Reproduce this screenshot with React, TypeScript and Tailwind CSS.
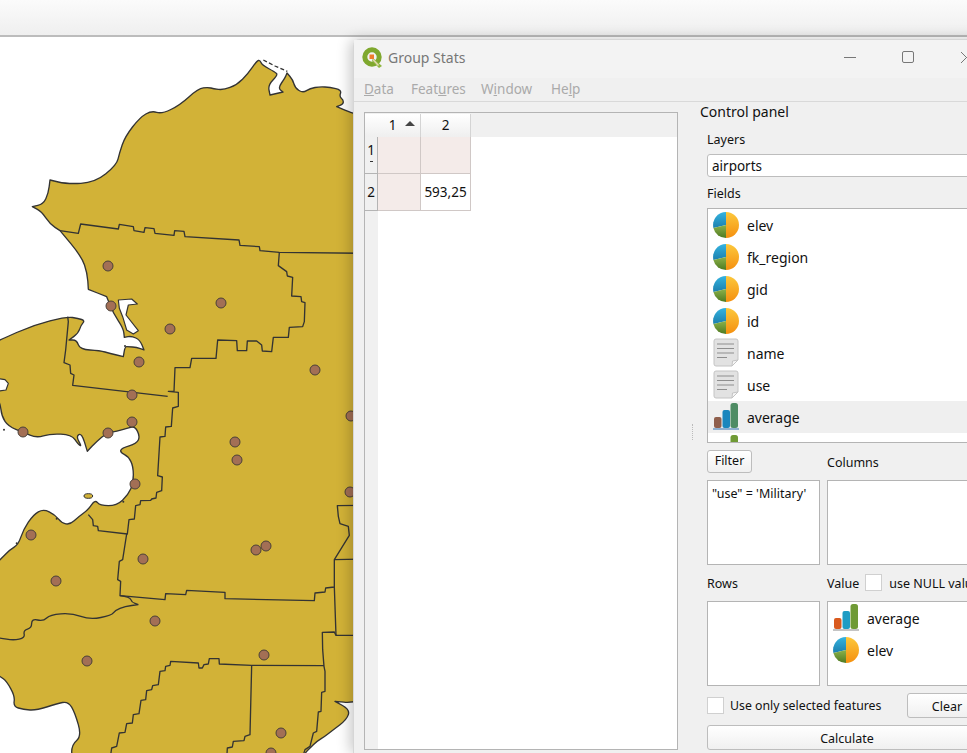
import type { ReactNode } from 'react';

// map coordinates are 3x page values, scaled down in the svg group
const coast =
  '1100,350 1058,340 1035,330 1010,320 1010,320 1030,312 1030,300 1018,290 1025,270 990,262 960,260 930,265 909,279 885,264 879,240 861,219 861,219 855,234 834,264 849,276 849,276 810,285 810,285 804,255 834,225 825,216 786,195 780,180 770,183 745,220 710,255 670,270 640,266 625,262 595,265 540,315 485,342 455,332 420,352 375,410 358,460 350,495 285,548 200,552 150,540 150,540 145,580 130,612 97,620 97,620 125,635 150,672 180,692 180,692 245,770 262,820 265,868 265,868 320,890 320,890 340,940 370,985 373,1012 373,1012 395,1008 420,1020 432,1050 432,1050 410,1042 385,1040 375,1040 370,1070 370,1070 330,1060 300,1052 240,1048 230,1020 207,1020 207,1020 235,1000 243,975 255,962 235,955 200,950 100,975 0,1020 -20,1030 -20,1190 0,1204 5,1249 25,1279 70,1297 110,1314 150,1301 215,1304 235,1334 245,1339 228,1309 245,1299 262,1354 262,1354 290,1324 320,1299 350,1294 385,1284 405,1279 420,1309 410,1331 365,1344 360,1357 385,1369 400,1399 400,1449 385,1484 350,1517 300,1517 285,1499 265,1529 235,1551 210,1574 185,1569 165,1544 130,1527 100,1544 70,1589 55,1634 30,1649 0,1679 -20,1700 -20,2020 0,2029 20,2044 45,2089 40,2119 70,2129 110,2131 170,2111 205,2104 225,2139 245,2209 215,2234 215,2280 905,2280 915,2259 930,2244 950,2224 975,2209 1000,2189 1040,2159 1050,2129 1005,2104 1005,2104 1058,2109 1100,2090 1100,350';

const holes = [
  'M355 900 L395 897 L412 912 L385 915 L378 945 L415 992 L400 1002 L380 990 L368 950 L358 925 Z',
  'M-10 1135 L15 1139 L25 1150 L18 1170 L-10 1174 Z',
];

const specks = [
  [370, 1505], [12, 1289], [50, 1630], [375, 1038], [170, 1556],
];

const borders = [
  '180,692 235,700 242,672 355,687 358,673 400,680 402,692 432,697 435,683 462,686 465,700 522,706 524,692 552,694 555,710 717,720 720,736 778,740 780,752 838,757 1100,760',
  '838,757 835,797 860,815 862,828 878,832 875,888 903,890 905,905 915,908 913,965 908,980 868,982 865,1012 820,1012 815,1055 787,1053 785,1035 770,1023 742,1023 740,1052 712,1052 710,1022 653,1020 648,1075 575,1075 570,1103 525,1103 522,1174 505,1174 535,1177 535,1219 518,1224 514,1279 497,1281 495,1309 480,1311 473,1427 487,1431 485,1472 470,1477 468,1494 455,1497 452,1501 422,1502 420,1514 407,1517 403,1557 387,1559 382,1602 295,1592 293,1579 280,1577 278,1559 265,1544',
  '380,1602 368,1679 358,1684 353,1739 362,1744 360,1787 495,1799 497,1781 557,1784 560,1771 675,1777 675,1796 943,1802 945,1779 975,1776 977,1764 1003,1761 1003,1679 1048,1606 1045,1579 1020,1571 1015,1549 1012,1517 1100,1516',
  '1003,1679 1100,1677',
  '1003,1761 1008,1906 1100,1906',
  '1008,1906 1003,1896 967,1897 968,1949 972,1999 975,2014 975,2074 965,2077 963,2134 955,2136 950,2194 940,2199 930,2239 915,2249 905,2280',
  '972,1997 755,1996 658,1992 657,1976 628,1976 625,1992 612,1994 607,2004 597,2004 595,1989 512,1984 510,1996 497,1999 495,2012 480,2014 475,2054 458,2057 455,2069 440,2072 437,2099 423,2101 417,2141 400,2144 397,2169 380,2171 375,2197 358,2199 350,2239 335,2244 330,2280',
  '755,1996 750,2204 735,2209 732,2222 700,2224 697,2241 682,2244 680,2280',
  '203,950 205,965 197,1050 192,1088 210,1095 212,1120 222,1125 218,1156 503,1189',
];

const river = '360,1787 390,1791 395,1807 415,1814 415,1814 375,1819 345,1831 335,1846 270,1859 215,1839 150,1844 130,1864 95,1856 95,1884 70,1891 75,1914 40,1921 0,1914 -20,1912';

const airports = [
  [108, 266], [111, 306], [221, 303], [170, 329], [139, 362], [315, 370], [132, 395], [132, 422],
  [108, 433], [23, 432], [235, 442], [237, 460], [135, 484], [31, 535], [143, 559], [256, 550],
  [266, 546], [56, 581], [155, 621], [264, 655], [87, 661], [281, 733], [271, 753], [351, 416], [350, 492],
];

// rounds a list of points into a path through the segment midpoints
function smooth(points: string) {
  const pts = points.split(' ').map((p) => p.split(',').map(Number));
  let d = `M${pts[0][0]} ${pts[0][1]}`;
  for (let i = 1; i < pts.length - 1; i++) {
    const mx = (pts[i][0] + pts[i + 1][0]) / 2;
    const my = (pts[i][1] + pts[i + 1][1]) / 2;
    d += ` Q${pts[i][0]} ${pts[i][1]} ${mx} ${my}`;
  }
  const last = pts[pts.length - 1];
  return `${d} L${last[0]} ${last[1]}`;
}

function MapView() {
  return (
    <svg width="360" height="716" viewBox="0 37 360 716" className="block">
      <g transform="scale(0.33333)">
        <path d={smooth(coast)} fill="#d2b237" stroke="#333" strokeWidth="4" strokeLinejoin="round" />
        <path d="M790 180 L825 198 L862 214" fill="none" stroke="#333" strokeWidth="4" strokeDasharray="12 7" />
        {holes.map((d, i) => (
          <path key={i} d={d} fill="#fff" stroke="#333" strokeWidth="3.5" strokeLinejoin="round" />
        ))}
        <ellipse cx="265" cy="1488" rx="13" ry="7" fill="#d2b237" stroke="#333" strokeWidth="3" />
        {specks.map(([cx, cy], i) => (
          <circle key={i} cx={cx} cy={cy} r="3" fill="#333" />
        ))}
        {borders.map((pts, i) => (
          <polyline key={i} points={pts} fill="none" stroke="#333" strokeWidth="4" strokeLinejoin="round" />
        ))}
        <path d={smooth(river)} fill="none" stroke="#333" strokeWidth="4" />
      </g>
      {airports.map(([cx, cy], i) => (
        <circle key={i} cx={cx} cy={cy} r="5" fill="#a36f55" stroke="#4a4038" strokeWidth="1" />
      ))}
    </svg>
  );
}

function QgisLogo() {
  return (
    <svg width="21" height="21" viewBox="0 0 21 21">
      <circle cx="10" cy="10" r="7.2" fill="none" stroke="#7fa82e" strokeWidth="5" />
      <path d="M11 11 L20 19 L17 21 L10 14 Z" fill="#8fb640" />
      <path d="M11 12.5 L16.5 18.5" stroke="#e4d9b0" strokeWidth="1.6" />
      <rect x="7.5" y="7.5" width="4.5" height="4.5" fill="#ee7d2c" />
    </svg>
  );
}

function PieIcon() {
  return (
    <svg width="26" height="26" viewBox="0 0 26 26">
      <defs>
        <linearGradient id="pieOrange" x1="0" y1="0" x2="0" y2="1">
          <stop offset="0" stopColor="#fcc83c" />
          <stop offset="1" stopColor="#f5900f" />
        </linearGradient>
        <linearGradient id="pieBlue" x1="0" y1="0" x2="0" y2="1">
          <stop offset="0" stopColor="#35b4e0" />
          <stop offset="1" stopColor="#1c7fae" />
        </linearGradient>
        <linearGradient id="pieGreen" x1="0" y1="0" x2="0" y2="1">
          <stop offset="0" stopColor="#8cb24a" />
          <stop offset="1" stopColor="#4f7a22" />
        </linearGradient>
      </defs>
      <path d="M13 13 V0 A13 13 0 0 1 13 26 Z" fill="url(#pieOrange)" />
      <path d="M13 13 V0 A13 13 0 0 0 0.4 16 Z" fill="url(#pieBlue)" />
      <path d="M13 13 L0.4 16 A13 13 0 0 0 13 26 Z" fill="url(#pieGreen)" />
    </svg>
  );
}

function TextIcon() {
  return (
    <svg width="26" height="30" viewBox="0 0 26 30">
      <path d="M3 1 H23 A2 2 0 0 1 25 3 V22 L19 28 H3 A2 2 0 0 1 1 26 V3 A2 2 0 0 1 3 1 Z" fill="#e2e2e2" stroke="#c4c4c4" />
      <path d="M19 28 L19.5 23 L25 22 Z" fill="#f6f6f6" stroke="#c4c4c4" />
      <path d="M4 6 H21 M4 10.5 H21 M4 15 H21 M4 19.5 H14" stroke="#8e8e8e" strokeWidth="1.2" />
    </svg>
  );
}

function BarIcon({ muted = false }: { muted?: boolean }) {
  const c = muted
    ? ['#8f5f4c', '#1a86bd', '#4f8c64', '#8fb0d0']
    : ['#d95a1e', '#1f9cc4', '#6f9a35', '#c4c4c4'];
  return (
    <svg width="26" height="28" viewBox="0 0 26 28">
      <rect x="1" y="14" width="7.5" height="11" rx="2" fill={c[0]} />
      <rect x="9.5" y="7" width="7.5" height="18" rx="2" fill={c[1]} />
      <rect x="17.5" y="0" width="7.5" height="25" rx="2.5" fill={c[2]} />
      <rect x="0" y="25" width="26" height="2" fill={c[3]} />
    </svg>
  );
}

function FieldRow({ icon, label, active }: { icon: ReactNode; label: string; active?: boolean }) {
  return (
    <div className={`flex h-8 shrink-0 items-center gap-2 pl-[5px] ${active ? 'bg-[#efefef]' : ''}`}>
      <span className="flex w-[26px] justify-center">{icon}</span>
      <span>{label}</span>
    </div>
  );
}

function Check() {
  return <span className="block h-[17px] w-[17px] shrink-0 border border-[#d0d0d0] bg-white" />;
}

function PushButton({ children, className }: { children: ReactNode; className: string }) {
  return (
    <div className={`flex items-center justify-center rounded-[3px] border border-[#bdbdbd] bg-gradient-to-b from-white to-[#f0f0f0] ${className}`}>
      {children}
    </div>
  );
}

function MenuItem({ pre, u, post, className }: { pre: string; u: string; post: string; className?: string }) {
  return (
    <span className={className}>
      {pre}
      <span className="underline">{u}</span>
      {post}
    </span>
  );
}

export default function App() {
  return (
    <div className="relative h-[753px] w-[967px] overflow-hidden bg-white font-['Noto_Sans',sans-serif] text-[14px] text-[#111]">
      <div className="h-[37px] border-b-2 border-[#bcbcbc] bg-gradient-to-b from-[#fbfbfb] to-[#efefef]" />
      <MapView />

      <div className="absolute left-[353px] top-[39px] flex h-[714px] w-[660px] flex-col rounded-tl-[7px] border-l border-t border-[#d6d6d6] bg-[#f0f0f0] shadow-[-3px_0_14px_rgba(0,0,0,0.22)]">
        <div className="flex h-[38px] shrink-0 items-center bg-[#f3f3f3] pb-[4px] pl-2">
          <QgisLogo />
          <span className="ml-[5px] text-[14px] text-[#777]">Group Stats</span>
          <svg className="ml-[379px]" width="13" height="13" viewBox="0 0 13 13">
            <path d="M0 6.5 H12" stroke="#777" />
          </svg>
          <svg className="ml-[45px]" width="13" height="13" viewBox="0 0 13 13">
            <rect x="0.5" y="0.5" width="11" height="11" rx="1.5" fill="none" stroke="#777" />
          </svg>
          <svg className="ml-[45px]" width="13" height="13" viewBox="0 0 13 13">
            <path d="M1 1 L12 12 M12 1 L1 12" stroke="#777" />
          </svg>
        </div>

        <div className="flex h-[24px] shrink-0 items-center border-b border-[#d9d9d9] pl-[10px] text-[13.5px] text-[#aaa]">
          <MenuItem pre="" u="D" post="ata" className="w-[47px]" />
          <MenuItem pre="Feat" u="u" post="res" className="w-[70px]" />
          <MenuItem pre="W" u="i" post="ndow" className="w-[70px]" />
          <MenuItem pre="He" u="l" post="p" />
        </div>

        <div className="flex min-h-0 flex-1 text-[13.5px]">
          <div className="mb-[3px] ml-[10px] mt-[10px] flex w-[314px] flex-col border border-[#b4b4b4] bg-white">
            <div className="flex h-[24px] shrink-0 bg-[#f0f0f0] pt-[1px]">
              <div className="relative flex w-[56px] items-center justify-center border-r border-[#d4d4d4] bg-gradient-to-b from-white to-[#efefef]">
                1
                <span className="absolute right-[5px] top-[7px] h-0 w-0 border-x-[5px] border-b-[5px] border-x-transparent border-b-[#444]" />
              </div>
              <div className="flex w-[50px] items-center justify-center border-r border-[#d4d4d4] bg-gradient-to-b from-white to-[#efefef]">
                2
              </div>
            </div>
            <div className="flex h-[37px] shrink-0">
              <div className="flex w-[13px] flex-col items-center border-b border-r border-[#b4b4b4] bg-[#f0f0f0] pt-[4px] leading-[18px]">
                1<span className="mt-[2px] h-[1px] w-[3px] bg-[#333]" />
              </div>
              <div className="w-[43px] border-b border-r border-[#d0c8c6] bg-[#f4ebe9]" />
              <div className="w-[50px] border-b border-r border-[#d0c8c6] bg-[#f4ebe9]" />
            </div>
            <div className="flex h-[37px] shrink-0">
              <div className="flex w-[13px] items-center justify-center border-b border-r border-[#b4b4b4] bg-[#f0f0f0]">2</div>
              <div className="w-[43px] border-b border-r border-[#d0c8c6] bg-[#f4ebe9]" />
              <div className="flex w-[50px] items-center justify-center border-b border-r border-[#d0c8c6]">593,25</div>
            </div>
            <div className="w-[13px] flex-1 bg-[#f0f0f0]" />
          </div>

          <div className="relative w-[22px]">
            <span className="absolute left-[14px] top-[322px] h-[16px] w-[1px] border-l border-dotted border-[#bbb]" />
          </div>

          <div className="flex w-[287px] flex-col">
            <div className="h-[20px] text-[14px] leading-[20px]">Control panel</div>
            <div className="flex flex-1 flex-col pl-[7px]">
              <div className="mt-[8px] h-[20px] text-[12.5px] leading-[20px]">Layers</div>
              <div className="mt-[4px] flex h-[23px] w-[280px] items-center rounded-[3px] border border-[#bdbdbd] bg-white pl-[4px] pt-[2px]">
                airports
              </div>
              <div className="mt-[7px] h-[20px] text-[12.5px] leading-[20px]">Fields</div>
              <div className="mt-[4px] flex h-[235px] w-[280px] flex-col overflow-hidden border border-[#b4b4b4] bg-white text-[14px]">
                <FieldRow icon={<PieIcon />} label="elev" />
                <FieldRow icon={<PieIcon />} label="fk_region" />
                <FieldRow icon={<PieIcon />} label="gid" />
                <FieldRow icon={<PieIcon />} label="id" />
                <FieldRow icon={<TextIcon />} label="name" />
                <FieldRow icon={<TextIcon />} label="use" />
                <FieldRow icon={<BarIcon muted />} label="average" active />
                <FieldRow icon={<BarIcon />} label="" />
              </div>

              <div className="mt-[7px] flex h-[23px] items-center">
                <PushButton className="h-[23px] w-[45px] text-[12.5px]">Filter</PushButton>
                <span className="ml-[75px] pt-[4px] text-[12.5px]">Columns</span>
              </div>
              <div className="mt-[7px] flex h-[85px] gap-[7px]">
                <div className="w-[113px] border border-[#b4b4b4] bg-white px-[4px] py-[4px] text-[12.5px]">"use" = 'Military'</div>
                <div className="w-[160px] border border-[#b4b4b4] bg-white" />
              </div>

              <div className="mt-[9px] flex h-[17px] items-center text-[12.5px]">
                <span className="w-[120px] pt-[4px]">Rows</span>
                <span className="pt-[4px]">Value</span>
                <span className="ml-[6px]"><Check /></span>
                <span className="ml-[7px] whitespace-nowrap pt-[4px]">use NULL values</span>
              </div>
              <div className="mt-[10px] flex h-[85px] gap-[7px]">
                <div className="w-[113px] border border-[#b4b4b4] bg-white" />
                <div className="flex w-[160px] flex-col border border-[#b4b4b4] bg-white text-[14px]">
                  <FieldRow icon={<BarIcon />} label="average" />
                  <FieldRow icon={<PieIcon />} label="elev" />
                </div>
              </div>

              <div className="mt-[7px] flex h-[25px] items-center text-[12.3px]">
                <Check />
                <span className="ml-[6px] w-[177px] pt-[2px]">Use only selected features</span>
                <PushButton className="h-[25px] w-[80px] pt-[3px] text-[12.5px]">Clear</PushButton>
              </div>
              <PushButton className="mt-[7px] h-[25px] w-[280px] pt-[3px] text-[12.5px]">Calculate</PushButton>
            </div>
          </div>
        </div>
      </div>
    </div>
  );
}
